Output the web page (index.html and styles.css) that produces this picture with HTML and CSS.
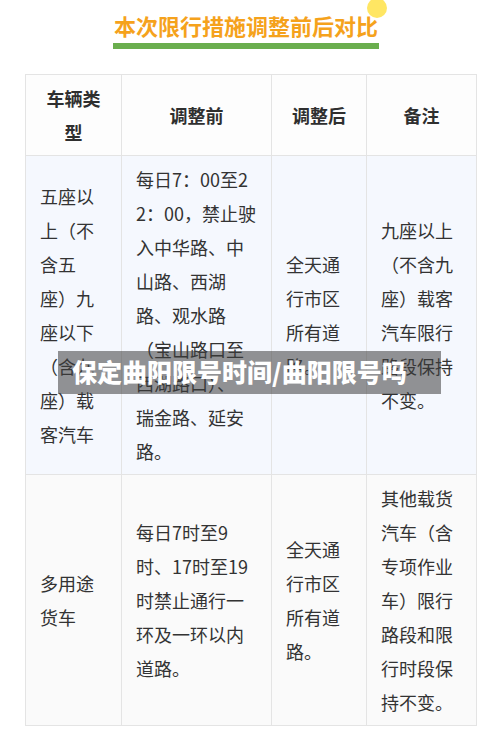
FILE: index.html
```html
<!DOCTYPE html>
<html lang="zh-CN">
<head>
<meta charset="utf-8">
<title>本次限行措施调整前后对比</title>
<link rel="stylesheet" href="styles.css">
</head>
<body>
<div class="page">
  <div class="heading">
    <div class="heading-inner">
      <span class="dot"></span>
      <h1 class="title">本次限行措施调整前后对比</h1>
      <div class="title-bar"></div>
    </div>
  </div>
  <table class="compare">
    <colgroup>
      <col class="c1"><col class="c2"><col class="c3"><col class="c4">
    </colgroup>
    <thead>
      <tr>
        <th>车辆类<br>型</th>
        <th>调整前</th>
        <th>调整后</th>
        <th>备注</th>
      </tr>
    </thead>
    <tbody>
      <tr class="row-a">
        <td>五座以<br>上（不<br>含五<br>座）九<br>座以下<br>（含九<br>座）载<br>客汽车</td>
        <td>每日7：00至2<br>2：00，禁止驶<br>入中华路、中<br>山路、西湖<br>路、观水路<br>（宝山路口至<br>西湖路口）、<br>瑞金路、延安<br>路。</td>
        <td>全天通<br>行市区<br>所有道<br>路。</td>
        <td>九座以上<br>（不含九<br>座）载客<br>汽车限行<br>路段保持<br>不变。</td>
      </tr>
      <tr class="row-b">
        <td>多用途<br>货车</td>
        <td>每日7时至9<br>时、17时至19<br>时禁止通行一<br>环及一环以内<br>道路。</td>
        <td>全天通<br>行市区<br>所有道<br>路。</td>
        <td>其他载货<br>汽车（含<br>专项作业<br>车）限行<br>路段和限<br>行时段保<br>持不变。</td>
      </tr>
    </tbody>
  </table>
  <div class="banner">保定曲阳限号时间/曲阳限号吗</div>
</div>
</body>
</html>
```

FILE: styles.css
```css
html, body {
  margin: 0;
  padding: 0;
  background: #ffffff;
}

body {
  font-family: "Noto Sans CJK SC", "Noto Sans", sans-serif;
  color: #333333;
}

.page {
  position: relative;
  width: 500px;
  height: 746px;
  overflow: hidden;
}

.heading {
  display: flex;
  justify-content: center;
  padding-right: 8px;
  height: 74px;
}

.heading-inner {
  position: relative;
  display: flex;
  flex-direction: column;
  align-items: stretch;
}

.dot {
  position: absolute;
  left: 253px;
  top: -2px;
  width: 20px;
  height: 20px;
  border-radius: 50%;
  background: rgba(255, 226, 72, 0.85);
}

.title {
  position: relative;
  margin: 0;
  padding-top: 10px;
  font-size: 22px;
  line-height: 30px;
  font-weight: 700;
  color: #f5a21c;
  white-space: nowrap;
}

.title-bar {
  height: 6px;
  margin-top: 3px;
  margin-left: -1px;
  margin-right: -1px;
  background: #6aae4e;
}

.compare {
  margin-left: 25px;
  width: 451px;
  table-layout: fixed;
  border-collapse: collapse;
  font-size: 18px;
  line-height: 34px;
  color: #333333;
}

.c1 { width: 96px; }
.c2 { width: 150px; }
.c3 { width: 95px; }
.c4 { width: 110px; }

.compare th,
.compare td {
  border: 1px solid #e4e4e4;
  padding: 6px 14px;
  vertical-align: middle;
  white-space: nowrap;
}

.compare th {
  background: #fdfdfd;
  font-weight: 700;
  text-align: center;
  color: #2f2f2f;
}

.compare td {
  text-align: left;
  font-weight: 400;
}

.row-a td {
  background: #f5f8fe;
}

.row-b td {
  background: #fafafa;
}

.banner {
  position: absolute;
  left: 58px;
  top: 351px;
  width: 369px;
  height: 43px;
  padding-left: 14px;
  background: rgba(60, 60, 60, 0.55);
  color: #ffffff;
  font-size: 25px;
  font-weight: 900;
  line-height: 40px;
  white-space: nowrap;
}
```
